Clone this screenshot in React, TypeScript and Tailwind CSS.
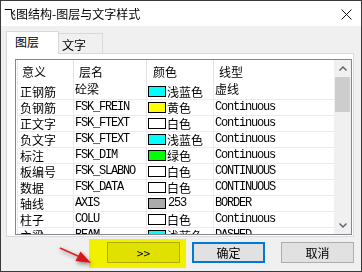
const rows = [
  ["正钢筋", "砼梁", "#00ffff", "浅蓝色", "虚线"],
  ["负钢筋", "FSK_FREIN", "#ffff00", "黄色", "Continuous"],
  ["正文字", "FSK_FTEXT", "#ffffff", "白色", "Continuous"],
  ["负文字", "FSK_FTEXT", "#00ffff", "浅蓝色", "Continuous"],
  ["标注", "FSK_DIM", "#00ff00", "绿色", "Continuous"],
  ["板编号", "FSK_SLABNO", "#ffffff", "白色", "CONTINUOUS"],
  ["数据", "FSK_DATA", "#ffffff", "白色", "CONTINUOUS"],
  ["轴线", "AXIS", "#ababab", "253", "BORDER"],
  ["柱子", "COLU", "#ffffff", "白色", "Continuous"],
  ["主梁", "BEAM", "#00ffff", "浅蓝色", "DASHED"],
];

const mono =
  "font-['Liberation_Mono','Noto_Sans_CJK_SC',monospace] text-[12px] tracking-[-1.2px]";

function Chevron({ up }: { up?: boolean }) {
  return (
    <svg width="8" height="5" viewBox="0 0 8 5" className="block">
      <path
        d={up ? "M0.5 4.5 L4 1 L7.5 4.5" : "M0.5 0.5 L4 4 L7.5 0.5"}
        fill="none"
        stroke="#606060"
        strokeWidth="1.4"
      />
    </svg>
  );
}

export default function App() {
  return (
    <div className="relative w-[362px] h-[272px] border border-[#3a3a3a] bg-[#f0f0f0] flex flex-col overflow-hidden font-['Noto_Sans_CJK_SC',sans-serif] text-black select-none">
      {/* title bar */}
      <div className="h-[25px] bg-white flex items-center justify-between pl-[3px] pr-[9px] shrink-0">
        <span className="text-[12px] leading-none">飞图结构-图层与文字样式</span>
        <svg width="11" height="11" viewBox="0 0 11 11" className="mt-[1px]">
          <path d="M0.5 0.5 L10.5 10.5 M10.5 0.5 L0.5 10.5" stroke="#111" strokeWidth="1" />
        </svg>
      </div>

      {/* tabs */}
      <div className="flex items-end ml-[5px] mt-[5px] h-[22px] shrink-0">
        <div className="relative z-10 h-[23px] -mb-px w-[53px] bg-white border border-b-0 border-[#d9d9d9] pl-[8px] pt-[3px] text-[12px] leading-[14px]">
          图层
        </div>
        <div className="h-[20px] w-[44px] border border-l-0 border-b-0 border-[#d9d9d9] bg-[#f0f0f0] pl-[3px] pt-[4px] text-[12px] leading-[14px]">
          文字
        </div>
      </div>

      {/* tab panel */}
      <div className="ml-[5px] w-[348px] h-[184px] bg-white border border-[#d9d9d9] pt-[5px] pl-[8px] pr-[1px] pb-[1px] shrink-0">
        <div className="h-full border border-[#828790] bg-white flex overflow-hidden">
          <div className="flex-1 pl-[1px] overflow-hidden">
            {/* header */}
            <div className="flex h-[24px] text-[12px] leading-[14px] items-center">
              <div className="w-[56px] h-full border-l border-[#ebebeb] pl-[4px] flex items-center">意义</div>
              <div className="w-[73px] h-full border-l border-[#e3e3e3] pl-[5px] flex items-center">层名</div>
              <div className="w-[67px] h-full border-l border-[#e3e3e3] pl-[6px] flex items-center">颜色</div>
              <div className="flex-1 h-full border-l border-[#e3e3e3] pl-[5px] flex items-center">线型</div>
            </div>
            {rows.map(([name, layer, color, colorName, line]) => (
              <div key={name} className="flex h-[16px] border-b border-[#ebebeb] leading-[15px]">
                <div className="w-[56px] border-l border-[#ebebeb] pl-[2px] text-[12px] whitespace-nowrap">
                  {name}
                </div>
                <div className={`w-[73px] border-l border-[#ebebeb] pl-[1px] whitespace-nowrap ${mono}`}>
                  {layer === "砼梁" ? <span className="tracking-normal">{layer}</span> : layer}
                </div>
                <div className="w-[67px] border-l border-[#ebebeb] pl-[1px] flex items-center whitespace-nowrap">
                  <span
                    className="w-[18px] h-[11px] border border-black shrink-0"
                    style={{ backgroundColor: color }}
                  />
                  <span className={colorName === "253" ? `ml-[2px] ${mono}` : "ml-[1px] text-[12px]"}>
                    {colorName}
                  </span>
                </div>
                <div className={`flex-1 border-l border-[#ebebeb] pl-[1px] whitespace-nowrap ${mono}`}>
                  {line === "虚线" ? <span className="tracking-normal">{line}</span> : line}
                </div>
              </div>
            ))}
          </div>
          {/* scrollbar */}
          <div className="w-[17px] bg-[#f0f0f0] flex flex-col">
            <div className="h-[17px] flex items-center justify-center">
              <Chevron up />
            </div>
            <div className="mx-[1px] h-[35px] bg-[#cdcdcd]" />
            <div className="flex-1" />
            <div className="h-[17px] flex items-center justify-center">
              <Chevron />
            </div>
          </div>
        </div>
      </div>

      {/* buttons */}
      <div className="flex justify-end mt-[5px] pr-[7px] text-[12px]">
        <button className="w-[73px] h-[21px] bg-[#e1e1e1] border border-[#adadad] flex items-center justify-center leading-none">
          &gt;&gt;
        </button>
        <button className="ml-[12px] w-[73px] h-[21px] bg-[#e1e1e1] border-2 border-[#0078d7] flex items-center justify-center leading-none">
          确定
        </button>
        <button className="ml-[16px] w-[73px] h-[21px] bg-[#e1e1e1] border border-[#adadad] flex items-center justify-center leading-none">
          取消
        </button>
      </div>

      {/* yellow highlight annotation */}
      <div className="absolute left-[88px] top-[238px] w-[97px] h-[29px] bg-[#ffff00] mix-blend-multiply pointer-events-none" />

      {/* red arrow annotation */}
      <svg
        className="absolute left-0 top-0 pointer-events-none"
        width="362"
        height="272"
        viewBox="0 0 362 272"
      >
        <defs>
          <filter id="sh" x="-50%" y="-50%" width="200%" height="200%">
            <feDropShadow dx="1" dy="2" stdDeviation="2" floodColor="#000" floodOpacity="0.45" />
          </filter>
        </defs>
        <g filter="url(#sh)">
          <line x1="59" y1="247" x2="78" y2="255.5" stroke="#e02020" strokeWidth="1.6" />
          <polygon points="90,262 74.5,260 79.5,250.5" fill="#d81515" />
        </g>
      </svg>
    </div>
  );
}
